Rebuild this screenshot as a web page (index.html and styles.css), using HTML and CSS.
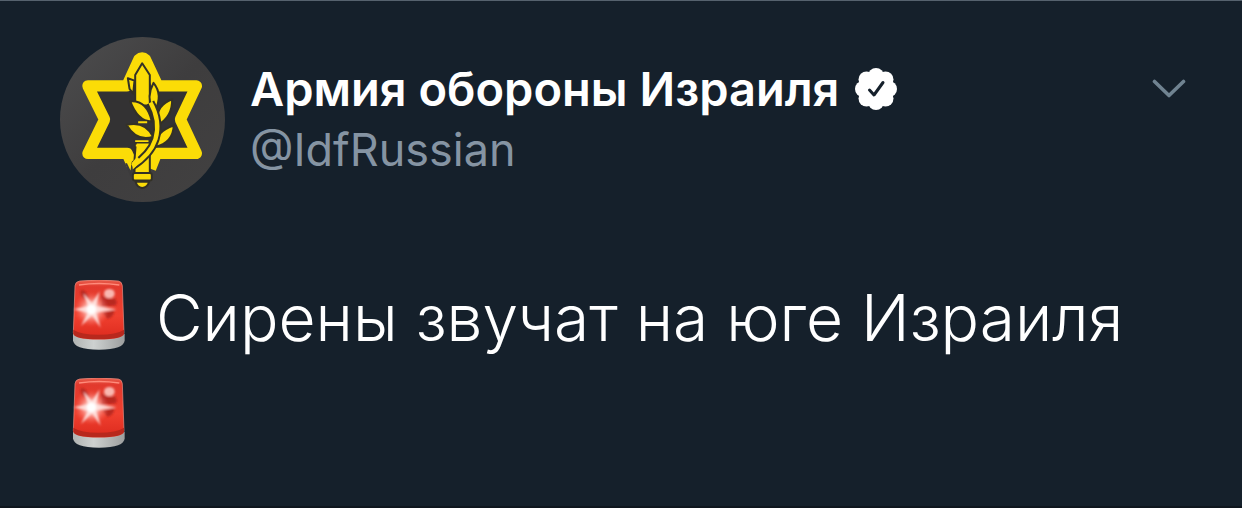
FILE: index.html
```html
<!DOCTYPE html>
<html lang="ru">
<head>
<meta charset="utf-8">
<meta name="viewport" content="width=device-width, initial-scale=1">
<title>Армия обороны Израиля</title>
<link rel="stylesheet" href="styles.css">
</head>
<body>
<svg class="defs" aria-hidden="true">
  <defs>
    <linearGradient id="dome" x1="0" y1="0" x2="0" y2="1">
      <stop offset="0" stop-color="#e8604f"/><stop offset=".12" stop-color="#e2392d"/>
      <stop offset=".6" stop-color="#f0402f"/><stop offset="1" stop-color="#dc2a1e"/>
    </linearGradient>
    <linearGradient id="base" x1="0" y1="0" x2="1" y2="0">
      <stop offset="0" stop-color="#b0b3b2"/><stop offset=".4" stop-color="#cdd1d0"/><stop offset="1" stop-color="#9c9e9e"/>
    </linearGradient>
    <radialGradient id="glow">
      <stop offset="0" stop-color="#fff"/><stop offset=".3" stop-color="#ffd9d4" stop-opacity=".9"/><stop offset="1" stop-color="#ff6a5c" stop-opacity="0"/>
    </radialGradient>
    <filter id="soft" x="-20%" y="-20%" width="140%" height="140%"><feGaussianBlur stdDeviation="3"/></filter>
    <symbol id="siren" viewBox="39 33 162 210">
      <path d="M42 194V214Q44 242 120 242T197 214V194Z" fill="url(#base)"/>
      <path d="M62 36Q120 29 178 36Q189 38 190 50L195 192Q192 211 119 211T43 192L48 50Q49 38 62 36Z" fill="url(#dome)" stroke="#e89084" stroke-width="2"/>
      <path d="M43 182Q65 197 119 197T195 182V195Q190 211 119 211T43 195Z" fill="#b8281d"/>
      <path d="M60 48Q120 39 181 48" fill="none" stroke="#ff8b7b" stroke-width="4"/>
      <g filter="url(#soft)">
        <path d="M66 62Q82 64 90 86L77 92Q62 80 66 62ZM126 78Q150 93 168 88Q177 102 170 109L127 113ZM130 130L166 124Q164 147 145 149Z" fill="#a8201d" opacity=".75"/>
        <ellipse cx="151" cy="74" rx="16" ry="14" fill="#f9b8b1"/>
        <circle cx="98" cy="121" r="52" fill="url(#glow)"/>
        <path d="M44 121L87 111L73 73L99 102L122 67L112 111L173 121L112 131L125 176L99 139L66 171L86 132Z" fill="#ffe9e6" opacity=".85"/>
        <circle cx="97" cy="121" r="14" fill="#fff"/>
      </g>
    </symbol>
  </defs>
</svg>
<article class="tweet">
  <header class="head">
    <svg class="avatar" viewBox="24 20 496 496" role="img" aria-label="Эмблема">
      <defs>
        <linearGradient id="disc" x1="0" y1="0" x2="1" y2="1">
          <stop offset="0" stop-color="#4d4d4e"/><stop offset=".5" stop-color="#3e3d3e"/><stop offset="1" stop-color="#424141"/>
        </linearGradient>
      </defs>
      <circle cx="272" cy="268" r="248" fill="url(#disc)"/>
      <path d="M271 84L227 167H108L158 268L108 370H434L386 268L434 167H315Z" fill="#333233"/>
      <path d="M242 407L226 370H108L158 268L108 167H225L261 88Q271 78 281 88L318 167H434L386 268L434 370H314L296 416" fill="none" stroke="#fbdc07" stroke-width="34" stroke-linejoin="round"/>
      <path d="M220 400L254 392V440H236Z" fill="#3c3b3c"/>
      <g fill="#fbdc07" stroke="#333126" stroke-width="6" stroke-linejoin="round">
        <path d="M228 144L248 151L244 190L233 176Z"/>
        <path d="M250 226V134L271 99L294 134V226Z"/>
        <path d="M252 337H294V430H248V389Z"/>
        <path d="M302 240Q283 198 305 158Q334 193 310 241Z"/>
        <path d="M235 213Q286 209 300 274Q258 275 235 213Z"/>
        <path d="M316 267Q316 224 361 207Q363 260 316 286Z"/>
        <path d="M224 284Q280 271 304 320Q254 336 224 284Z"/>
        <path d="M310 350Q310 304 366 286Q364 338 310 350Z"/>
        <rect x="243" y="429" width="57" height="22" rx="6"/>
        <path d="M251 455H292Q287 472 271 474Q256 472 251 455Z"/>
      </g>
      <path d="M250 333H290M252 346H291M259 276H286" fill="none" stroke="#fbdc07" stroke-width="6"/>
      <path d="M296 217Q327 273 311 327Q296 374 239 410" fill="none" stroke="#333126" stroke-width="25"/>
      <path d="M296 217Q327 273 311 327Q296 374 242 408" fill="none" stroke="#fbdc07" stroke-width="13"/>
      <path d="M240 398L256 380L268 393L243 418Z" fill="#fbdc07"/>
      <path d="M216 380L240 393L236 421Z" fill="#fbdc07"/>
    </svg>
    <div class="who">
      <div class="name-row">
        <h1 class="name">Армия обороны Израиля</h1>
        <svg class="badge" viewBox="0 0 42 42" role="img" aria-label="Подтверждённый аккаунт">
          <g fill="#fff">
            <circle cx="21" cy="21" r="16"/><circle cx="21" cy="8" r="8"/><circle cx="21" cy="34" r="8"/><circle cx="8" cy="21" r="8"/><circle cx="34" cy="21" r="8"/>
            <circle cx="11.5" cy="11.5" r="8"/><circle cx="30.5" cy="11.5" r="8"/><circle cx="11.5" cy="30.5" r="8"/><circle cx="30.5" cy="30.5" r="8"/>
          </g>
          <path d="M14.5 22L19 27L28 14.5" fill="none" stroke="#15202b" stroke-width="3" stroke-linecap="round" stroke-linejoin="round"/>
        </svg>
      </div>
      <a class="handle" href="#">@IdfRussian</a>
    </div>
    <button class="more" type="button" aria-label="Ещё">
      <svg class="chevron" viewBox="0 0 34 20" aria-hidden="true"><path d="M2.5 2.5L17 16.5L31.5 2.5" fill="none" stroke="#708391" stroke-width="3.6" stroke-linecap="round" stroke-linejoin="round"/></svg>
    </button>
  </header>
  <p class="text"><svg class="siren" role="img" aria-label="Сирена"><use href="#siren"/></svg> Сирены звучат на юге Израиля <svg class="siren" role="img" aria-label="Сирена"><use href="#siren"/></svg></p>
</article>
</body>
</html>
```
FILE: styles.css
```css
* {
  box-sizing: border-box;
}

body {
  margin: 0;
  min-height: 100vh;
  background: #15202b;
  color: #fff;
  font-family: Inter, "Noto Sans", sans-serif;
}

.defs {
  position: absolute;
  width: 0;
  height: 0;
}

.tweet {
  min-height: 100vh;
  padding: 36px 56px 40px 60px;
  border-top: 1px solid #56626e;
  border-bottom: 2px solid #0f161e;
}

.head {
  display: flex;
  align-items: flex-start;
  gap: 25px;
}

.avatar {
  flex: none;
  width: 165px;
  height: 165px;
}

.who {
  flex: 1;
  min-width: 0;
  padding-top: 21px;
}

.name-row {
  display: flex;
  align-items: center;
  gap: 16px;
}

.name {
  margin: 0;
  font-size: 47px;
  font-weight: 600;
  line-height: 62px;
}

.badge {
  flex: none;
  width: 42px;
  height: 42px;
}

.handle {
  display: block;
  color: #8594a3;
  font-size: 45px;
  line-height: 60px;
  text-decoration: none;
}

.more {
  display: flex;
  margin-top: 42px;
  padding: 0;
  border: 0;
  background: none;
  cursor: pointer;
}

.chevron {
  width: 34px;
  height: 20px;
}

.text {
  margin: 67px 0 0;
  padding-left: 12px;
  font-size: 64px;
  font-weight: 300;
  line-height: 98px;
}

.siren {
  width: 54px;
  height: 70px;
  margin-right: 12px;
  vertical-align: -9px;
}
```
